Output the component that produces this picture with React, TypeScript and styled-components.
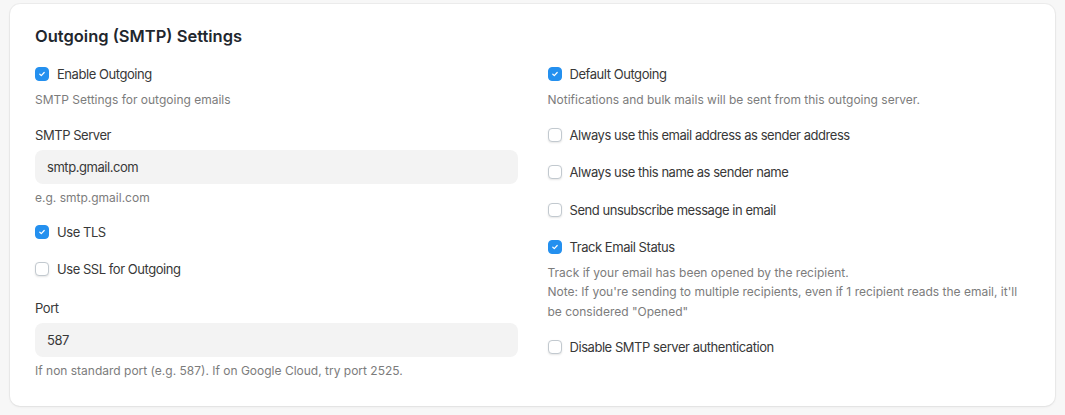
import { createGlobalStyle } from 'styled-components'
import styled from 'styled-components'

const GlobalStyle = createGlobalStyle`
  body {
    margin: 0;
    background: #f7f7f7;
    font-family: Inter, "Noto Sans", sans-serif;
    -webkit-font-smoothing: antialiased;
  }
`

const Page = styled.div`
  padding: 4px 10px 10px;
`

const Card = styled.section`
  background: #fff;
  border-radius: 10px;
  box-shadow: 0 0 0 1px rgba(0, 0, 0, 0.04), 0 1px 3px rgba(0, 0, 0, 0.06);
  padding: 20px 25px 25px;
`

const Title = styled.h2`
  margin: 0 0 16px;
  font-size: 16.5px;
  line-height: 24px;
  font-weight: 600;
  color: #1f272e;
`

const Columns = styled.div`
  display: grid;
  grid-template-columns: 1fr 1fr;
  column-gap: 30px;
`

const Column = styled.div`
  display: flex;
  flex-direction: column;
`

const Field = styled.div<{ $gap?: number }>`
  margin-bottom: ${p => p.$gap ?? 15}px;
`

const CheckRow = styled.label`
  display: flex;
  align-items: center;
  gap: 8px;
  height: 20px;
  font-size: 13px;
  letter-spacing: -0.45px;
  color: #383838;
`

const Box = styled.span<{ $checked?: boolean }>`
  width: 14px;
  height: 14px;
  flex: none;
  box-sizing: border-box;
  border-radius: 4px;
  display: inline-flex;
  align-items: center;
  justify-content: center;
  background: ${p => (p.$checked ? '#2490ef' : '#fff')};
  border: 1px solid ${p => (p.$checked ? '#2490ef' : '#c2c9cf')};
  box-shadow: ${p => (p.$checked ? 'none' : '0 1px 2px rgba(0,0,0,0.1)')};
`

const Label = styled.div`
  font-size: 13px;
  letter-spacing: -0.45px;
  line-height: 20px;
  color: #383838;
  margin-bottom: 5px;
`

const Input = styled.div`
  height: 34px;
  border-radius: 8px;
  background: #f3f3f3;
  padding: 0 12px;
  display: flex;
  align-items: center;
  font-size: 13px;
  letter-spacing: -0.45px;
  color: #383838;
`

const Help = styled.div<{ $top?: number }>`
  margin-top: ${p => p.$top ?? 6}px;
  font-size: 12px;
  line-height: 19.5px;
  color: #7c7c7c;
`

const Check = ({ label, checked }: { label: string; checked?: boolean }) => (
  <CheckRow>
    <Box $checked={checked}>
      {checked && (
        <svg width="8" height="8" viewBox="0 0 8 8" fill="none">
          <path d="M1.8 4.2 3.3 5.6 6.2 2.5" stroke="#fff" strokeWidth="1.2" strokeLinecap="round" strokeLinejoin="round" />
        </svg>
      )}
    </Box>
    {label}
  </CheckRow>
)

const App = () => {
  return (
    <Page>
      <GlobalStyle />
      <Card>
        <Title>Outgoing (SMTP) Settings</Title>
        <Columns>
          <Column>
            <Field>
              <Check label="Enable Outgoing" checked />
              <Help>SMTP Settings for outgoing emails</Help>
            </Field>
            <Field $gap={15}>
              <Label>SMTP Server</Label>
              <Input>smtp.gmail.com</Input>
              <Help $top={4}>e.g. smtp.gmail.com</Help>
            </Field>
            <Field $gap={17}>
              <Check label="Use TLS" checked />
            </Field>
            <Field $gap={19}>
              <Check label="Use SSL for Outgoing" />
            </Field>
            <Field $gap={0}>
              <Label>Port</Label>
              <Input>587</Input>
              <Help $top={4}>If non standard port (e.g. 587). If on Google Cloud, try port 2525.</Help>
            </Field>
          </Column>
          <Column>
            <Field>
              <Check label="Default Outgoing" checked />
              <Help>Notifications and bulk mails will be sent from this outgoing server.</Help>
            </Field>
            <Field $gap={17}>
              <Check label="Always use this email address as sender address" />
            </Field>
            <Field $gap={18}>
              <Check label="Always use this name as sender name" />
            </Field>
            <Field $gap={17}>
              <Check label="Send unsubscribe message in email" />
            </Field>
            <Field $gap={16}>
              <Check label="Track Email Status" checked />
              <Help>
                Track if your email has been opened by the recipient.
                <br />
                Note: If you're sending to multiple recipients, even if 1 recipient reads the email, it'll be considered "Opened"
              </Help>
            </Field>
            <Field $gap={0}>
              <Check label="Disable SMTP server authentication" />
            </Field>
          </Column>
        </Columns>
      </Card>
    </Page>
  )
}

export default App
